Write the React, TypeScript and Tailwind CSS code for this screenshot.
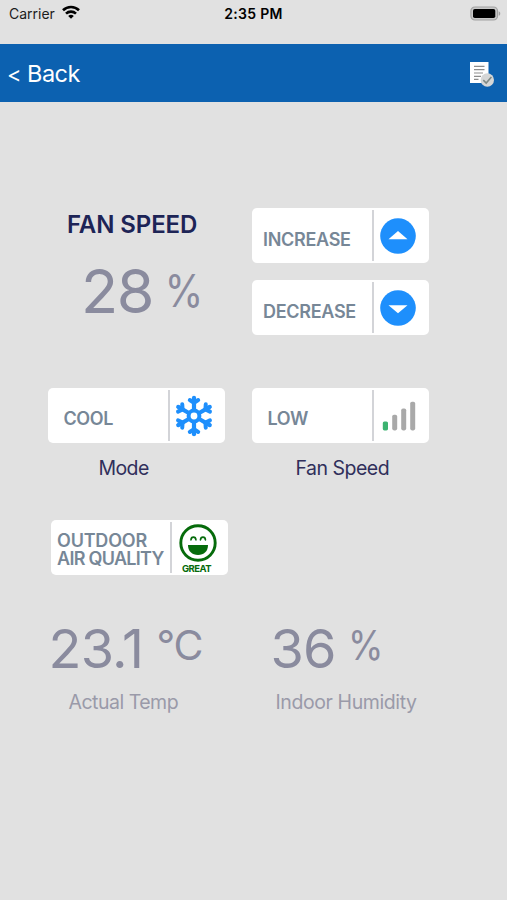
import type { ReactNode } from 'react';

interface TileProps {
    label: ReactNode;
    icon: ReactNode;
    labelClass?: string;
}

// White tile: label on the left, icon on the right of the divider
function Tile({ label, icon, labelClass = '' }: TileProps) {
    return (
        <button className="flex h-[55px] w-[177px] items-center rounded-[5px] bg-white text-left">
            <span className={`w-[119.5px] whitespace-nowrap text-[18px] font-semibold leading-[18px] text-[#778797] ${labelClass}`}>
                {label}
            </span>
            <span className="h-[51px] w-[2px] bg-[#d3d4d8]" />
            <span className="flex h-full w-[55px] justify-center">{icon}</span>
        </button>
    );
}

function ArrowIcon({ down = false }: { down?: boolean }) {
    return (
        <svg viewBox="0 0 36 36" className="mt-[10px] mr-[6px] h-[36px] w-[36px]">
            <circle cx="18" cy="18" r="17.8" fill="#1e8ffc" />
            <path d={down ? 'M8.5 15.2H27.5L18 23.2Z' : 'M8.5 21.2H27.5L18 13Z'} fill="#fff" />
        </svg>
    );
}

function SnowflakeIcon() {
    return (
        <svg viewBox="-21 -21 42 42" className="mt-[6.5px] mr-[6px] h-[42px] w-[42px]" fill="none" stroke="#1e8ffc" strokeLinecap="round" strokeLinejoin="round">
            {[0, 60, 120, 180, 240, 300].map((angle) => (
                <g key={angle} transform={`rotate(${angle})`}>
                    <path d="M0 -6.5V-18.2" strokeWidth="4.2" />
                    <path d="M-4.2 -16L0 -13.2L4.2 -16" strokeWidth="4" />
                </g>
            ))}
            <circle r="5.4" strokeWidth="4" />
        </svg>
    );
}

function SignalIcon() {
    return (
        <svg viewBox="0 0 34 30" className="mt-[13px] mr-[5px] h-[30px] w-[34px]">
            <rect x="0.8" y="20.4" width="5.2" height="9" rx="1.6" fill="#3cb371" />
            <rect x="10.2" y="13.8" width="5" height="15.6" rx="1.8" fill="#a9a9a9" />
            <rect x="19.2" y="7.4" width="5" height="22" rx="1.8" fill="#a9a9a9" />
            <rect x="28.2" y="0.8" width="5" height="28.6" rx="1.8" fill="#a9a9a9" />
        </svg>
    );
}

function GreatIcon() {
    return (
        <span className="flex flex-col items-center pr-[4px]">
            <svg viewBox="0 0 38 38" className="mt-[4px] h-[38px] w-[38px] shrink-0" fill="none" stroke="#066b0b">
                <circle cx="19" cy="19" r="17.2" strokeWidth="2.9" />
                <path d="M12 15.8C12.2 12.3 16.6 12.3 16.9 15.8M21.5 15.8C21.8 12.3 26.2 12.3 26.4 15.8" strokeWidth="1.7" strokeLinecap="round" />
                <path d="M9 21H29C29 27.2 25 31 19 31C13 31 9 27.2 9 21Z" fill="#066b0b" stroke="none" />
            </svg>
            <span className="mt-[2px] mr-[2px] text-[9.5px] font-bold leading-[10px] tracking-[-0.5px] text-[#066b0b]">GREAT</span>
        </span>
    );
}

function StatusBar() {
    return (
        <div className="flex h-[43.5px] items-start justify-between pt-[5px] pl-[9px] pr-[6px] text-[14px] leading-[18px] text-[#1c1c1c]">
            <div className="flex w-[215px] gap-[6px]">
                <span className="w-[47px]">Carrier</span>
                <svg viewBox="0 0 18 14" className="h-[14px] w-[18px]" fill="none" stroke="#000" strokeWidth="2.6">
                    <path d="M1 5.3C5.5 0.9 12.5 0.9 17 5.3" />
                    <path d="M4 8.6C6.8 5.9 11.2 5.9 14 8.6" />
                    <path d="M6.2 10.9C7.9 9.4 10.1 9.4 11.8 10.9L9 13.8Z" fill="#000" stroke="none" />
                </svg>
            </div>
            <span className="ml-[4px] whitespace-nowrap font-semibold tracking-[0.3px] text-black">2:35 PM</span>
            <div className="flex w-[222px] justify-end">
                <svg viewBox="0 0 31 15" className="mt-[0.5px] h-[15px] w-[31px]">
                    <rect x="0.9" y="1" width="26.6" height="13" rx="4" fill="#c8c8c8" stroke="#a2a2a2" strokeWidth="1.2" />
                    <rect x="3" y="3" width="22.3" height="9" rx="1.8" fill="#000" />
                    <path d="M28.7 5.2C30.8 6 30.8 9 28.7 9.8Z" fill="#a2a2a2" />
                </svg>
            </div>
        </div>
    );
}

function Header() {
    return (
        <header className="flex h-[58.5px] items-center justify-between bg-[#0c61b0] pl-[7px] pr-[12px]">
            <button className="mt-[2px] flex gap-[6px] whitespace-nowrap text-[23.5px] leading-[30px] tracking-[-0.5px] text-white">
                <span className="w-[14px] text-[22px]">&lt;</span>
                <span>Back</span>
            </button>
            <svg viewBox="0 0 26 27" className="mt-[3px] h-[27px] w-[26px]">
                <path d="M1 1H19.5V22H1Z" fill="#fff" />
                <path d="M5 5.3H15.5M5 8.7H15.5M5 12H14M5 15.3H12M5 18.4H9.5" stroke="#8d8d8d" strokeWidth="1.2" />
                <circle cx="18.3" cy="19" r="6.7" fill="#d5d6d6" />
                <path d="M14.3 19.2L17.2 22L22.4 16" fill="none" stroke="#7f8a86" strokeWidth="1.6" />
            </svg>
        </header>
    );
}

export default function App() {
    return (
        <div className="h-[900px] w-[507px] overflow-hidden bg-[#e1e1e1] font-['Inter','Liberation_Sans',sans-serif]">
            <StatusBar />
            <Header />

            <main className="pt-[106px]">
                {/* Fan speed and its controls */}
                <section className="flex h-[127px] pl-[48px]">
                    <div className="w-[204px] whitespace-nowrap pl-[19px]">
                        <h1 className="pt-[2px] text-[24px] font-semibold leading-[30px] tracking-[-0.1px] text-[#1d2456]">FAN SPEED</h1>
                        <div className="mt-[21px] flex items-center leading-[60px] text-[#8a8b9e]">
                            <span className="w-[82px] pl-[14px] text-[61px] tracking-[-1.5px]">28</span>
                            <span className="origin-left scale-x-[0.87] pl-[18px] text-[45px]">%</span>
                        </div>
                    </div>
                    <div className="flex flex-col gap-[17px]">
                        <Tile label="INCREASE" labelClass="pl-[11px] pt-[8px] tracking-[-0.3px]" icon={<ArrowIcon />} />
                        <Tile label="DECREASE" labelClass="pl-[11px] pt-[8px] tracking-[-0.3px]" icon={<ArrowIcon down />} />
                    </div>
                </section>

                {/* Mode and fan level */}
                <section className="mt-[53px] flex gap-[27px] pl-[48px] text-[19.5px] leading-[24px] text-[#302f5b]">
                    <div>
                        <Tile label="COOL" labelClass="pl-[15.5px] pt-[6px] tracking-[-0.4px]" icon={<SnowflakeIcon />} />
                        <p className="mt-[13px] pl-[50.5px] tracking-[-0.6px]">Mode</p>
                    </div>
                    <div>
                        <Tile label="LOW" labelClass="pl-[15.5px] pt-[6px] tracking-[-0.3px]" icon={<SignalIcon />} />
                        <p className="mt-[13px] pl-[43.5px] tracking-[-0.5px]">Fan Speed</p>
                    </div>
                </section>

                <section className="mt-[40px] pl-[50.5px]">
                    <Tile label={<>OUTDOOR<br /><span className="tracking-[-0.7px]">AIR QUALITY</span></>} labelClass="block pl-[6.5px] pt-[4px] tracking-[-0.2px]" icon={<GreatIcon />} />
                </section>

                {/* Sensor readings */}
                <section className="mt-[44px] flex whitespace-nowrap pl-[48.5px] text-[#8a8b9e]">
                    <div className="w-[222px]">
                        <div className="flex leading-[60px]">
                            <span className="w-[96px] text-[54px] tracking-[-0.8px]">23.1</span>
                            <span className="-mt-[4px] pl-[12px] text-[41px] tracking-[-1.2px]">°C</span>
                        </div>
                        <p className="mt-[11px] pl-[20px] text-[19.5px] leading-[24px] tracking-[-0.5px] text-[#9a9aa9]">Actual Temp</p>
                    </div>
                    <div>
                        <div className="flex leading-[60px]">
                            <span className="w-[66px] text-[54px] tracking-[-0.8px]">36</span>
                            <span className="-mt-[4px] origin-left scale-x-[0.88] pl-[12.5px] text-[41px]">%</span>
                        </div>
                        <p className="mt-[11px] pl-[5px] text-[19.5px] leading-[24px] tracking-[-0.4px] text-[#9a9aa9]">Indoor Humidity</p>
                    </div>
                </section>
            </main>
        </div>
    );
}
